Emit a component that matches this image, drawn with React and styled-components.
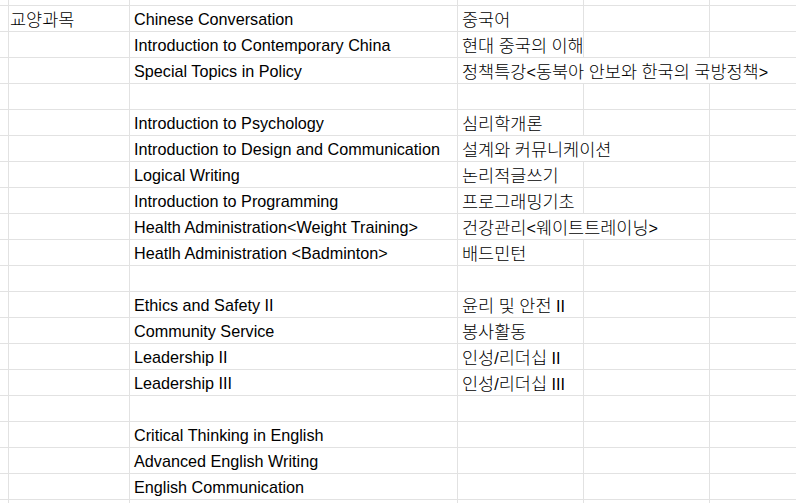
import React from "react";
import styled, { createGlobalStyle } from "styled-components";

const Global = createGlobalStyle`
  html, body { margin: 0; padding: 0; background: #ffffff; }
  body { overflow: hidden; }
`;

const Page = styled.div`
  width: 796px;
  height: 503px;
  overflow: hidden;
  background: #ffffff;
  font-family: "Liberation Sans", Arial, "Noto Sans CJK KR", sans-serif;
  font-size: 16.2px;
  color: #000000;
`;

const Sheet = styled.div`
  display: flex;
  flex-direction: column;
  width: 836px;
`;

const Row = styled.div`
  display: grid;
  grid-template-columns: 5px 125px 328px 126px 126px 126px;
  height: ${(p) => p.$h}px;
`;

const Cell = styled.div`
  box-sizing: border-box;
  grid-column: span ${(p) => p.$span || 1};
  border-right: 1px solid #e2e2e2;
  border-bottom: 1px solid #e2e2e2;
  display: flex;
  align-items: center;
  padding: 1px 4px 0 ${(p) => (p.$first ? 5 : 4)}px;
  line-height: 18px;
  min-width: 0;
`;

const Content = styled.span`
  white-space: pre;
`;

const Hangul = styled.span`
  font-family: "Noto Sans CJK KR", sans-serif;
  font-weight: 300;
  font-size: 17.5px;
  line-height: 18px;
`;

function Text({ children }) {
  if (!children) return null;
  const parts = children.split(/([\uAC00-\uD7A3]+)/);
  return (
    <Content>
      {parts.map((p, i) =>
        /[\uAC00-\uD7A3]/.test(p) ? <Hangul key={i}>{p}</Hangul> : <React.Fragment key={i}>{p}</React.Fragment>
      )}
    </Content>
  );
}

const rows = [
  ["교양과목", "Chinese Conversation", "중국어"],
  ["", "Introduction to Contemporary China", "현대 중국의 이해"],
  ["", "Special Topics in Policy", "정책특강<동북아 안보와 한국의 국방정책>", 3],
  ["", "", ""],
  ["", "Introduction to Psychology", "심리학개론"],
  ["", "Introduction to Design and Communication", "설계와 커뮤니케이션", 2],
  ["", "Logical Writing", "논리적글쓰기"],
  ["", "Introduction to Programming", "프로그래밍기초"],
  ["", "Health Administration<Weight Training>", "건강관리<웨이트트레이닝>", 2],
  ["", "Heatlh Administration <Badminton>", "배드민턴"],
  ["", "", ""],
  ["", "Ethics and Safety II", "윤리 및 안전 II"],
  ["", "Community Service", "봉사활동"],
  ["", "Leadership II", "인성/리더십 II"],
  ["", "Leadership III", "인성/리더십 III"],
  ["", "", ""],
  ["", "Critical Thinking in English", ""],
  ["", "Advanced English Writing", ""],
  ["", "English Communication", ""],
  ["", "", ""],
];

function DataRow({ a, b, c, span, h }) {
  const s = span || 1;
  const rest = [];
  for (let i = 0; i < 3 - s; i++) rest.push(<Cell key={"r" + i} />);
  return (
    <Row $h={h}>
      <Cell />
      <Cell $first><Text>{a}</Text></Cell>
      <Cell><Text>{b}</Text></Cell>
      <Cell $span={s}><Text>{c}</Text></Cell>
      {rest}
    </Row>
  );
}

export default function App() {
  return (
    <>
      <Global />
      <Page>
        <Sheet>
          <DataRow a="" b="" c="" h={6} />
          {rows.map((r, i) => (
            <DataRow key={i} a={r[0]} b={r[1]} c={r[2]} span={r[3]} h={26} />
          ))}
        </Sheet>
      </Page>
    </>
  );
}
